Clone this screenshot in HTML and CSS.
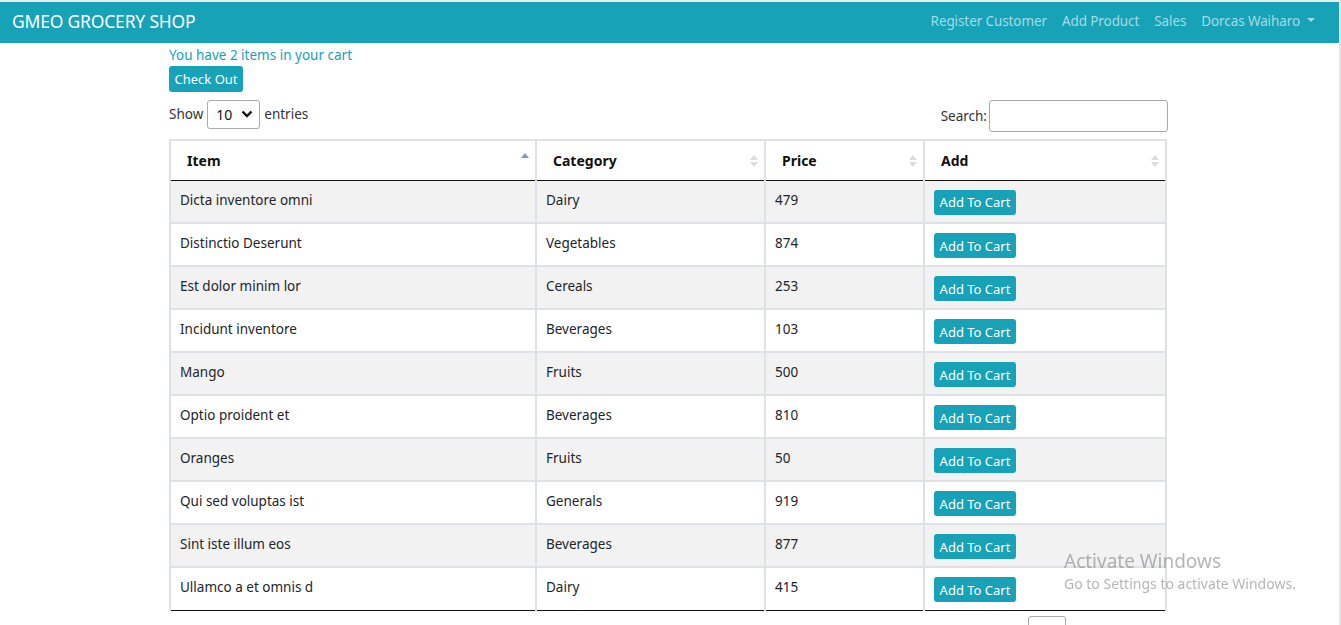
FILE: index.html
```html
<!DOCTYPE html>
<html lang="en">
<head>
<meta charset="utf-8">
<title>GMEO Grocery Shop</title>
<link rel="stylesheet" href="styles.css">
</head>
<body>
<nav class="navbar">
  <a class="brand" href="#">GMEO GROCERY SHOP</a>
  <ul class="nav-links">
    <li><a href="#">Register Customer</a></li>
    <li><a href="#">Add Product</a></li>
    <li><a href="#">Sales</a></li>
    <li><a href="#" class="dropdown">Dorcas Waiharo <span class="caret"></span></a></li>
  </ul>
</nav>

<main class="container">
  <div class="cart-info">You have 2 items in your cart</div>
  <button class="btn btn-info btn-checkout">Check Out</button>

  <div class="dt-top">
    <label class="dt-length">Show
      <span class="select-box"><span>10</span>
        <svg width="12" height="8" viewBox="0 0 12 8"><path d="M1.5 1.5 L6 6 L10.5 1.5" fill="none" stroke="#111" stroke-width="2.4"/></svg>
      </span>
      entries</label>
    <label class="dt-search">Search:<span class="search-input"></span></label>
  </div>

  <table class="dt-table">
    <thead>
      <tr>
        <th class="c-item sorted">Item</th>
        <th class="c-cat">Category</th>
        <th class="c-price">Price</th>
        <th class="c-add">Add</th>
      </tr>
    </thead>
    <tbody>
      <tr class="odd"><td>Dicta inventore omni</td><td>Dairy</td><td>479</td><td><button class="btn btn-info btn-add">Add To Cart</button></td></tr>
      <tr><td>Distinctio Deserunt</td><td>Vegetables</td><td>874</td><td><button class="btn btn-info btn-add">Add To Cart</button></td></tr>
      <tr class="odd"><td>Est dolor minim lor</td><td>Cereals</td><td>253</td><td><button class="btn btn-info btn-add">Add To Cart</button></td></tr>
      <tr><td>Incidunt inventore</td><td>Beverages</td><td>103</td><td><button class="btn btn-info btn-add">Add To Cart</button></td></tr>
      <tr class="odd"><td>Mango</td><td>Fruits</td><td>500</td><td><button class="btn btn-info btn-add">Add To Cart</button></td></tr>
      <tr><td>Optio proident et</td><td>Beverages</td><td>810</td><td><button class="btn btn-info btn-add">Add To Cart</button></td></tr>
      <tr class="odd"><td>Oranges</td><td>Fruits</td><td>50</td><td><button class="btn btn-info btn-add">Add To Cart</button></td></tr>
      <tr><td>Qui sed voluptas ist</td><td>Generals</td><td>919</td><td><button class="btn btn-info btn-add">Add To Cart</button></td></tr>
      <tr class="odd"><td>Sint iste illum eos</td><td>Beverages</td><td>877</td><td><button class="btn btn-info btn-add">Add To Cart</button></td></tr>
      <tr><td>Ullamco a et omnis d</td><td>Dairy</td><td>415</td><td><button class="btn btn-info btn-add">Add To Cart</button></td></tr>
    </tbody>
  </table>

  <div class="dt-bottom"><span class="page-box"></span></div>
</main>

<div class="watermark">
  <div class="wm-title">Activate Windows</div>
  <div class="wm-sub">Go to Settings to activate Windows.</div>
</div>
</body>
</html>
```

FILE: styles.css
```css
* { box-sizing: border-box; }

html, body {
  margin: 0;
  padding: 0;
  background: #fff;
  height: 100%;
  overflow: hidden;
}

body {
  font-family: "Noto Sans", "Open Sans", "Liberation Sans", sans-serif;
  font-size: 13.5px;
  color: #212529;
  border-top: 2px solid #e8eef0;
  border-right: 2px solid #e4e6e8;
}

a { text-decoration: none; }

.navbar {
  height: 41px;
  background: #17a2b8;
  display: flex;
  align-items: center;
  justify-content: space-between;
  padding: 0 24px 3px 12px;
}

.brand {
  color: #fff;
  font-size: 17.5px;
  letter-spacing: -0.2px;
}

.nav-links {
  display: flex;
  list-style: none;
  margin: 0;
  padding: 0;
  gap: 15px;
}

.nav-links a {
  color: #a3dce5;
  font-size: 13.5px;
  letter-spacing: -0.1px;
  display: flex;
  align-items: center;
}

.caret {
  display: inline-block;
  margin-left: 7px;
  border-top: 4.5px solid #a3dce5;
  border-left: 4px solid transparent;
  border-right: 4px solid transparent;
  margin-top: -2px;
}

.container {
  width: 999px;
  margin-left: 169px;
  padding-top: 2px;
}

.cart-info {
  color: #17a2b8;
  font-size: 13.5px;
  line-height: 20px;
}

.btn {
  font-family: inherit;
  border: none;
  border-radius: 3px;
  color: #fff;
  background: #17a2b8;
  cursor: pointer;
  padding: 0;
}

.btn-checkout {
  display: block;
  width: 74px;
  height: 26px;
  font-size: 13px;
  margin-top: 1px;
}

.dt-top {
  display: flex;
  justify-content: space-between;
  align-items: center;
  margin-top: 7px;
  height: 32px;
}

.dt-length, .dt-search {
  display: flex;
  align-items: center;
  color: #333;
  font-size: 13.5px;
}

.select-box {
  display: inline-flex;
  align-items: center;
  justify-content: space-between;
  width: 53px;
  height: 29px;
  border: 1px solid #aaa;
  border-radius: 3px;
  margin: 0 4px 0 4px;
  padding: 0 6px 0 8px;
  color: #111;
  font-size: 14px;
}

.dt-length { margin-top: -2px; }

.search-input {
  display: inline-block;
  width: 179px;
  height: 32px;
  border: 1px solid #aaa;
  border-radius: 3px;
  margin-left: 2px;
}

.dt-search { margin-top: 1px; }

.dt-table {
  margin-top: 8px;
  width: 998px;
  border-collapse: collapse;
  border: 2px solid #dee2e6;
  border-bottom: 1px solid #111;
  table-layout: fixed;
}

.dt-table th, .dt-table td {
  border-left: 2px solid #dee2e6;
  border-right: 2px solid #dee2e6;
  text-align: left;
}

.dt-table th {
  height: 40px;
  padding: 0 30px 0 16px;
  font-weight: 700;
  font-size: 14px;
  color: #111;
  border-bottom: 1px solid #111;
  background: #fff;
  position: relative;
}

.dt-table th::after,
.dt-table th::before {
  content: "";
  position: absolute;
  right: 6px;
  border-left: 4px solid transparent;
  border-right: 4px solid transparent;
}

.dt-table th::before {
  top: 14px;
  border-bottom: 5px solid #dcdcdc;
}

.dt-table th::after {
  top: 21px;
  border-top: 5px solid #dcdcdc;
}

.dt-table th.sorted::before {
  top: 12px;
  border-bottom-color: #8f8fdc;
}

.dt-table th.sorted::after { display: none; }

.c-item { width: 366px; }
.c-cat { width: 229px; }
.c-price { width: 159px; }

.dt-table td {
  height: 43px;
  padding: 9px 9px 0 9px;
  vertical-align: top;
  font-size: 13.5px;
  color: #212529;
  border-top: 2px solid #dee2e6;
  line-height: 20px;
}

.dt-table tbody tr:first-child td { border-top: none; }

.dt-table tr.odd td { background: #f2f2f2; }

.btn-add {
  width: 82px;
  height: 25px;
  font-size: 13px;
  margin-top: 0;
}

.dt-bottom {
  display: flex;
  justify-content: flex-end;
  padding-right: 102px;
  padding-top: 5px;
}

.page-box {
  display: inline-block;
  width: 38px;
  height: 30px;
  border: 1px solid #aaa;
  border-radius: 3px;
}

.watermark {
  position: fixed;
  left: 1064px;
  top: 549px;
  color: rgba(120, 120, 120, 0.55);
  pointer-events: none;
}

.wm-title {
  font-size: 19px;
  line-height: 24px;
}

.wm-sub {
  font-size: 14px;
  line-height: 22px;
}
```
